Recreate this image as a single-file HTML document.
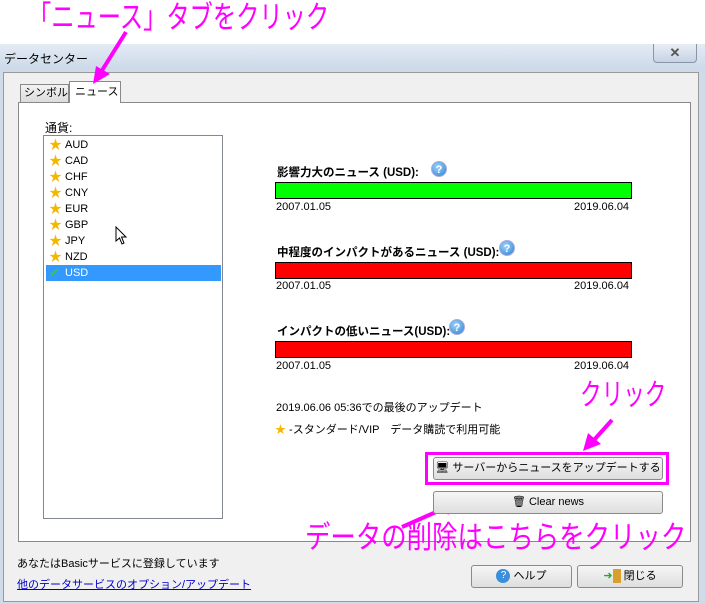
<!DOCTYPE html>
<html><head><meta charset="utf-8"><style>
*{margin:0;padding:0;box-sizing:border-box}
body{width:705px;height:604px;position:relative;overflow:hidden;background:#fff;font-family:"Liberation Sans","Noto Sans CJK JP",sans-serif;font-size:11px;color:#000}
.a{position:absolute}
.mg{color:#f0f;font-size:29px;white-space:nowrap;line-height:1;transform-origin:0 0}
.bar{position:absolute;left:275px;width:357px;height:17px;border:1px solid #000}
.h{position:absolute;left:277px;font-weight:bold;font-size:11.5px;white-space:nowrap}
.d{position:absolute;font-size:11px}
.q{position:absolute;width:16px;height:16px;border-radius:50%;background:radial-gradient(circle at 40% 35%,#9fd4ff,#2a7fd0);color:#fff;font-size:11px;font-weight:bold;text-align:center;line-height:16px;border:1px solid #aad}
.btn{position:absolute;border:1px solid #8a8a8a;border-radius:3px;background:linear-gradient(#f6f6f6,#dedede);text-align:center;font-size:11px;line-height:20px;white-space:nowrap}
.it{position:absolute;left:46px;width:175px;height:16px;line-height:16px;padding-left:19px}
.st{position:absolute;left:3px;top:1px;color:#f5b800;font-size:13px;line-height:14px}
</style></head><body>
<div class="a mg" style="left:28px;top:2px;font-size:31px;transform:scaleX(0.75)">「ニュース」タブをクリック</div>
<div class="a" style="left:0;top:44px;width:705px;height:30px;background:linear-gradient(#e3ebf5,#c9d6e6)"></div>
<div class="a" style="left:4px;top:50px;font-size:12px">データセンター</div>
<div class="a" style="left:653px;top:44px;width:44px;height:19px;border:1px solid #8895a8;border-top:none;border-radius:0 0 4px 4px;background:linear-gradient(#e8eef6,#c7d3e3);text-align:center;font-weight:bold;color:#555;font-size:13px;line-height:18px">✕</div>
<div class="a" style="left:0;top:70px;width:705px;height:534px;background:#cfdbe9"></div>
<div class="a" style="left:3px;top:72px;width:696px;height:530px;background:#f0f0f0;border:1px solid #999"></div>
<div class="a" style="left:18px;top:102px;width:673px;height:440px;background:#fff;border:1px solid #898989"></div>
<div class="a" style="left:20px;top:84px;width:49px;height:19px;border:1px solid #898989;background:linear-gradient(#f3f3f3,#dcdcdc);font-size:11px;padding-left:3px;line-height:17px;white-space:nowrap;overflow:hidden">シンボル</div>
<div class="a" style="left:69px;top:81px;width:52px;height:22px;border:1px solid #898989;border-bottom:none;background:#fff;font-size:11px;padding-left:5px;line-height:20px;white-space:nowrap">ニュース</div>
<div class="a" style="left:45px;top:119px;font-size:12px">通貨:</div>
<div class="a" style="left:43px;top:135px;width:180px;height:384px;border:1px solid #828790;background:#fff"></div>
<div class="it" style="top:137px">AUD<span class="st">★</span></div>
<div class="it" style="top:153px">CAD<span class="st">★</span></div>
<div class="it" style="top:169px">CHF<span class="st">★</span></div>
<div class="it" style="top:185px">CNY<span class="st">★</span></div>
<div class="it" style="top:201px">EUR<span class="st">★</span></div>
<div class="it" style="top:217px">GBP<span class="st">★</span></div>
<div class="it" style="top:233px">JPY<span class="st">★</span></div>
<div class="it" style="top:249px">NZD<span class="st">★</span></div>
<div class="it" style="top:265px;background:#3399ff;color:#fff">USD<span class="st" style="color:#3c3">✔</span></div>
<svg class="a" style="left:115px;top:226px" width="14" height="20"><path d="M1 1 L1 15 L4.5 12 L7 18 L9 17 L6.5 11 L11 11 Z" fill="#fff" stroke="#000"/></svg>
<div class="h" style="top:164px">影響力大のニュース (USD):</div><div class="q" style="left:431px;top:161px">?</div>
<div class="bar" style="top:182px;background:#0f0"></div>
<div class="d" style="left:276px;top:201px">2007.01.05</div><div class="d" style="left:574px;top:201px">2019.06.04</div>
<div class="h" style="top:244px">中程度のインパクトがあるニュース (USD):</div><div class="q" style="left:499px;top:240px">?</div>
<div class="bar" style="top:262px;background:#f00"></div>
<div class="d" style="left:276px;top:280px">2007.01.05</div><div class="d" style="left:574px;top:280px">2019.06.04</div>
<div class="h" style="top:323px">インパクトの低いニュース(USD):</div><div class="q" style="left:449px;top:319px">?</div>
<div class="bar" style="top:341px;background:#f00"></div>
<div class="d" style="left:276px;top:360px">2007.01.05</div><div class="d" style="left:574px;top:360px">2019.06.04</div>
<div class="d" style="left:276px;top:399px">2019.06.06 05:36での最後のアップデート</div>
<div class="d" style="left:275px;top:421px"><span style="color:#f5b800">★</span> -スタンダード/VIP　データ購読で利用可能</div>
<div class="a mg" style="left:580px;top:381px;font-size:30px;transform:scaleX(0.72)">クリック</div>
<svg class="a" style="left:0;top:0" width="705" height="604"><g stroke="#f0f" stroke-width="4" fill="#f0f">
<line x1="126" y1="32" x2="101" y2="72"/><polygon points="93,84 96,66 110,74" stroke="none"/>
<line x1="612" y1="420" x2="594" y2="440"/><polygon points="583,451 588,433 601,444" stroke="none"/>
<line x1="402" y1="527" x2="445" y2="508"/><polygon points="458,502 441,500 448,515" stroke="none"/></g></svg>
<div class="a" style="left:425px;top:452px;width:244px;height:33px;border:3px solid #f0f"></div>
<div class="btn" style="left:433px;top:457px;width:230px;height:23px">🖥 サーバーからニュースをアップデートする</div>
<div class="btn" style="left:433px;top:491px;width:230px;height:23px">🗑 Clear news</div>
<div class="a mg" style="left:305px;top:522px;font-size:31px;transform:scaleX(0.82)">データの削除はこちらをクリック</div>
<div class="a" style="left:17px;top:555px;font-size:11px">あなたはBasicサービスに登録しています</div>
<div class="a" style="left:17px;top:576px;font-size:11px;color:#00c;text-decoration:underline">他のデータサービスのオプション/アップデート</div>
<div class="btn" style="left:471px;top:565px;width:101px;height:23px"><span style="display:inline-block;width:14px;height:14px;border-radius:50%;background:#3a8fdc;color:#fff;font-size:10px;line-height:14px;vertical-align:middle">?</span> ヘルプ</div>
<div class="btn" style="left:577px;top:565px;width:106px;height:23px"><span style="color:#2a2">➜</span><span style="display:inline-block;width:8px;height:14px;background:#d9a030;vertical-align:middle"></span> 閉じる</div>
</body></html>
